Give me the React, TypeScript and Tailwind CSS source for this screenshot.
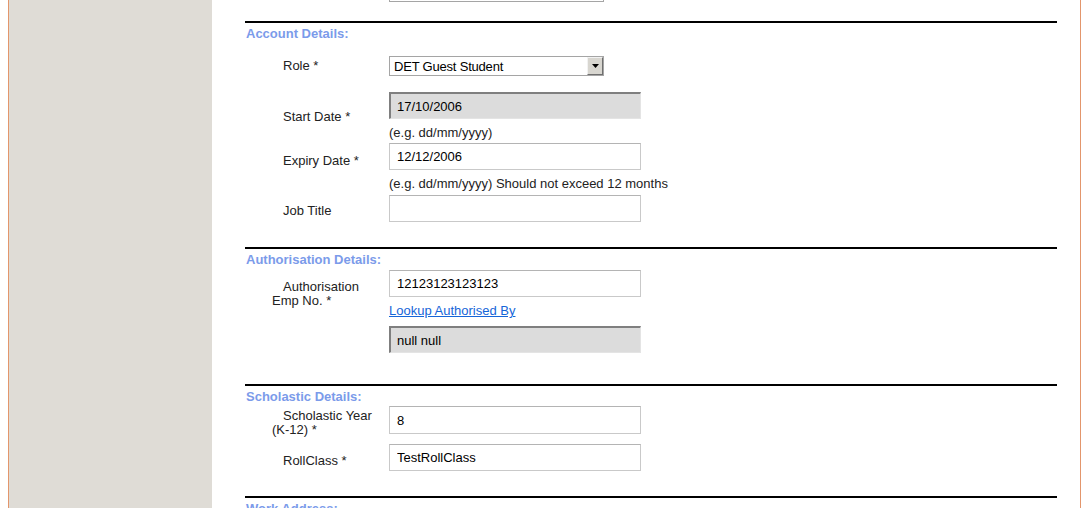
import type { ReactNode } from 'react'

function Rule() {
  return <div className="h-[2px] bg-black" />
}

function Header({ children }: { children: ReactNode }) {
  return (
    <div className="mt-[3px] pl-[1px] font-bold text-[#7b9bea]">{children}</div>
  )
}

function Label({ children, pt }: { children: ReactNode; pt: string }) {
  return (
    <div className={`w-[117px] shrink-0 indent-[11px] text-[#222] ${pt}`}>{children}</div>
  )
}

function TextBox({ value, h = 'h-[27px]' }: { value?: string; h?: string }) {
  return (
    <input
      readOnly
      value={value ?? ''}
      className={`${h} w-[252px] border border-[#c9c9c9] border-t-[#b4b4b4] bg-white pl-[7px] text-[13px] text-black outline-none`}
    />
  )
}

function DisabledBox({ value }: { value: string }) {
  return (
    <div className="flex h-[27px] w-[252px] items-center border-t-2 border-l-2 border-[#7f7f7f] border-r border-r-[#e4e4e4] border-b border-b-[#e4e4e4] bg-[#dcdcdc] pl-[6px] text-black">
      {value}
    </div>
  )
}

function Select({ value, className = '' }: { value: string; className?: string }) {
  return (
    <div className={`flex h-[20px] w-[215px] items-center border border-[#a5a5a5] bg-white ${className}`}>
      <span className="flex-1 pl-[4px] text-black tracking-[-0.2px]">{value}</span>
      <div className="flex h-[18px] w-[16px] items-center justify-center border border-[#f2f2f2] border-r-[#6f6f6f] border-b-[#6f6f6f] bg-[#d8d6d0]">
        <svg width="7" height="4" viewBox="0 0 7 4">
          <path d="M0 0h7L3.5 4z" fill="#000" />
        </svg>
      </div>
    </div>
  )
}

function Hint({ children }: { children: ReactNode }) {
  return <div className="mt-[6px] text-[#222]">{children}</div>
}

export default function App() {
  return (
    <div className="flex h-[508px] w-[1084px] overflow-hidden bg-white font-['Liberation_Sans',Arial,sans-serif] text-[13px] leading-[15px]">
      <div className="w-[8px] shrink-0" />
      <div className="w-[204px] shrink-0 border-l border-[#e3966c] bg-[#dfdcd6]" />

      <main className="w-[868px] shrink-0 pl-[33px] pr-[23px]">
        {/* tail of the select above the fold */}
        <Select value="" className="-mt-[20px] ml-[144px] h-[22px]" />

        <div className="mt-[19px]">
          <Rule />
          <Header>Account Details:</Header>

          <div className="mt-[15px] flex pl-[27px]">
            <Label pt="pt-[2px]">Role *</Label>
            <Select value="DET Guest Student" />
          </div>

          <div className="mt-[16px] flex pl-[27px]">
            <Label pt="pt-[17px]">Start Date *</Label>
            <div>
              <DisabledBox value="17/10/2006" />
              <Hint>(e.g. dd/mm/yyyy)</Hint>
            </div>
          </div>

          <div className="mt-[3px] flex pl-[27px]">
            <Label pt="pt-[10px]">Expiry Date *</Label>
            <div>
              <TextBox value="12/12/2006" />
              <Hint>(e.g. dd/mm/yyyy) Should not exceed 12 months</Hint>
            </div>
          </div>

          <div className="mt-[4px] flex pl-[27px]">
            <Label pt="pt-[8px]">Job Title</Label>
            <TextBox />
          </div>
        </div>

        <div className="mt-[25px]">
          <Rule />
          <Header>Authorisation Details:</Header>

          <div className="mt-[3px] flex pl-[27px]">
            <Label pt="pt-[10px] leading-[14px]">
              Authorisation
              <br />
              Emp No. *
            </Label>
            <div>
              <TextBox value="12123123123123" />
              <div className="mt-[6px]">
                <a href="#" className="text-[#1565d8] underline">
                  Lookup Authorised By
                </a>
              </div>
              <div className="mt-[8px]">
                <DisabledBox value="null null" />
              </div>
            </div>
          </div>
        </div>

        <div className="mt-[31px]">
          <Rule />
          <Header>Scholastic Details:</Header>

          <div className="mt-[2px] flex h-[28px] pl-[27px]">
            <Label pt="pt-[3px] leading-[14px]">
              Scholastic Year
              <br />
              (K-12) *
            </Label>
            <TextBox value="8" h="h-[28px]" />
          </div>

          <div className="mt-[10px] flex pl-[27px]">
            <Label pt="pt-[9px]">RollClass *</Label>
            <TextBox value="TestRollClass" />
          </div>
        </div>

        <div className="mt-[25px]">
          <Rule />
          <Header>Work Address:</Header>
        </div>
      </main>

      <div className="w-[1px] shrink-0 bg-[#e3966c]" />
      <div className="flex-1" />
    </div>
  )
}
